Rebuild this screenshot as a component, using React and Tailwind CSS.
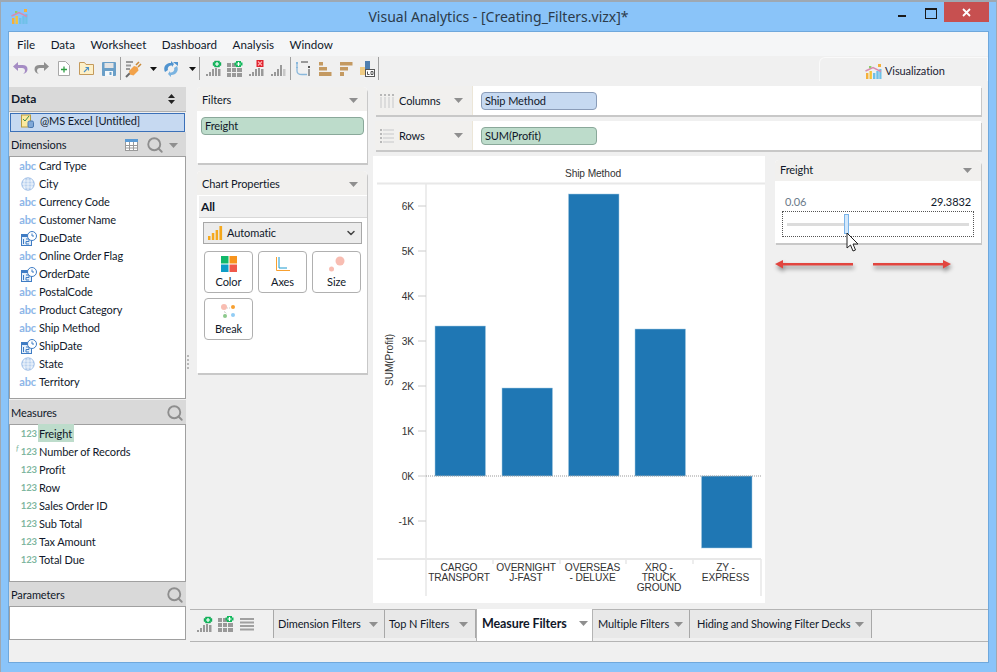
import React from "react";
import { Search, ChevronDown } from "lucide-react";

const DIMENSIONS = [
  { name: "Card Type", type: "abc" },
  { name: "City", type: "geo" },
  { name: "Currency Code", type: "abc" },
  { name: "Customer Name", type: "abc" },
  { name: "DueDate", type: "date" },
  { name: "Online Order Flag", type: "abc" },
  { name: "OrderDate", type: "date" },
  { name: "PostalCode", type: "abc" },
  { name: "Product Category", type: "abc" },
  { name: "Ship Method", type: "abc" },
  { name: "ShipDate", type: "date" },
  { name: "State", type: "geo" },
  { name: "Territory", type: "abc" },
];

const MEASURES = ["Freight", "Number of Records", "Profit", "Row", "Sales Order ID", "Sub Total", "Tax Amount", "Total Due"];

const BARS = [
  { x: 62, top: 170, h: 150, label: ["CARGO", "TRANSPORT"] },
  { x: 129, top: 232, h: 88, label: ["OVERNIGHT", "J-FAST"] },
  { x: 195.5, top: 38, h: 282, label: ["OVERSEAS", "- DELUXE"] },
  { x: 262, top: 173, h: 147, label: ["XRQ -", "TRUCK", "GROUND"] },
  { x: 328.5, top: 320, h: 72, label: ["ZY -", "EXPRESS"] },
];

const TICKS = [["6K", 50], ["5K", 95], ["4K", 140], ["3K", 185], ["2K", 230], ["1K", 275], ["0K", 320], ["-1K", 365]];

const Caret = ({ className = "" }) => (
  <svg width="9" height="5" viewBox="0 0 9 5" className={className}>
    <path d="M0 0h9L4.5 5z" fill="#8f8f8f" />
  </svg>
);

const BlackCaret = ({ className = "" }) => (
  <svg width="7" height="4" viewBox="0 0 7 4" className={className}>
    <path d="M0 0h7L3.5 4z" fill="#111" />
  </svg>
);

const Logo = ({ className = "" }) => (
  <svg width="17" height="17" viewBox="0 0 17 17" className={className}>
    <rect x="1" y="10" width="2.4" height="6" fill="#f5b03a" />
    <rect x="4.500" y="8" width="2.4" height="8" fill="#f5c33a" />
    <rect x="8" y="10" width="2.4" height="6" fill="#6fc1e8" />
    <rect x="11.300" y="8" width="2.4" height="8" fill="#6fc1e8" />
    <rect x="14.300" y="6" width="2.2" height="10" fill="#6fc1e8" />
    <rect x="4" y="3" width="2.4" height="2.4" fill="#8ccf6a" />
    <rect x="13" y="1" width="3" height="3" fill="#f5b03a" />
    <path d="M0.500 8L8 4.500l8 4" fill="none" stroke="#d78cb0" strokeWidth="1.400" />
  </svg>
);

const Undo = ({ color, flip, className = "" }) => (
  <svg width="16" height="15" viewBox="0 0 16 15" className={className} style={flip ? { transform: "scaleX(-1)" } : undefined}>
    <path d="M6 1L1 5.500 6 10V7h4c2 0 3 1.200 3 2.800 0 1.200-.6 2.200-2 3.200 3-.6 4.500-2.600 4.500-4.800C15.500 5.400 13.500 4 10.500 4H6z" fill={color} />
  </svg>
);

const NewDoc = ({ className = "" }) => (
  <svg width="12" height="15" viewBox="0 0 12 15" className={className}>
    <path d="M.5.500h7l4 4v10H.500z" fill="#fff" stroke="#a8a8a8" />
    <path d="M6 5.500v6M3 8.500h6" stroke="#2f9e44" strokeWidth="1.300" />
  </svg>
);

const Folder = ({ className = "" }) => (
  <svg width="15" height="13" viewBox="0 0 15 13" className={className}>
    <path d="M.5 12.500V.500h5l1.500 2h7.500v10z" fill="#fdf0c8" stroke="#c49a5c" />
    <path d="M5 10l4.500-4.500M6.500 5.500h3v3" fill="none" stroke="#4a90c8" strokeWidth="1.100" />
  </svg>
);

const Save = ({ className = "" }) => (
  <svg width="14" height="14" viewBox="0 0 14 14" className={className}>
    <rect width="14" height="14" rx="1" fill="#6a9fc8" />
    <rect x="2.500" y="1" width="9" height="5" fill="#e4e4e4" />
    <rect x="3" y="9" width="8" height="5" fill="#f4f8fb" />
    <rect x="7.500" y="10" width="2" height="3" fill="#6a9fc8" />
  </svg>
);

const Plug = ({ className = "" }) => (
  <svg width="18" height="18" viewBox="0 0 18 18" className={className}>
    <rect x="1" y="1" width="7" height="2" fill="#9a9a9a" />
    <rect x="1" y="4.500" width="5" height="2" fill="#9a9a9a" />
    <rect x="1" y="8" width="4" height="2" fill="#9a9a9a" />
    <path d="M1 17l4-4" stroke="#6a6a6a" strokeWidth="2" />
    <path d="M4 11l5-5 3.500 1 1 3.500-5 5-3.500-1z" fill="#f2a24a" />
    <path d="M11 5l3-3M13 7l3-3" stroke="#c98a3a" strokeWidth="1.600" />
  </svg>
);

const Sync = ({ className = "" }) => (
  <svg width="16" height="16" viewBox="0 0 16 16" className={className}>
    <path d="M2 11C-.5 6 3.500 1.500 8 2V0l3 3-2 3V4.500C6 4 4 7 5 9z" fill="#4f93cf" />
    <path d="M14 5c2.500 5-1.500 9.500-6 9v2l-3-3 2-3v1.500c3 .5 5-2.500 4-4.500z" fill="#7ab3e0" />
    <path d="M10 1h5v4z" fill="#4f93cf" />
  </svg>
);

// bar chart glyph used by several toolbar buttons, with an optional badge on top
const BarsIcon = ({ badge, light, className = "" }) => (
  <svg width="16" height="17" viewBox="0 0 16 17" className={className}>
    <rect x="0" y="14" width="2" height="2" fill="#999" />
    <rect x="3" y="12" width="2" height="4" fill="#999" />
    <rect x="6" y="9" width="2" height="7" fill="#999" />
    <rect x="9" y={light ? 5 : 8} width="2" height={light ? 11 : 8} fill="#999" />
    <rect x="12" y="9" width="2.500" height="7" fill={light ? "#c8c8c8" : "#999"} />
    {badge === "plus" && (
      <>
        <path d="M8.500 1h5v1.500H15v3h-1.500V7h-5V5.500H7v-3h1.500z" fill="#12b85c" stroke="#0d9a4c" strokeWidth=".4" />
        <path d="M11 2v4M9 4h4" stroke="#fff" strokeWidth="1.200" />
      </>
    )}
    {badge === "x" && (
      <>
        <rect x="7.500" y="0" width="7" height="7" fill="#e0202c" />
        <path d="M9 1.500l4 4M13 1.500l-4 4" stroke="#ffb0b0" strokeWidth="1.200" />
      </>
    )}
  </svg>
);

const GridIcon = ({ className = "" }) => (
  <svg width="16" height="16" viewBox="0 0 16 16" className={className}>
    <path d="M0 2h4v4H0zM5 2h4v4H5zM0 7h4v4H0zM5 7h4v4H5zM10 7h5v4h-5zM0 12h4v4H0zM5 12h4v4H5zM10 12h5v4h-5z" fill="#999" />
    <path d="M9 0h5v1.500h1.500v3H14V6H9V4.500H7.500v-3H9z" fill="#12b85c" />
    <path d="M11.500 1v4M9.500 3h4" stroke="#fff" strokeWidth="1.200" />
  </svg>
);

const SwapIcon = ({ className = "" }) => (
  <svg width="14" height="15" viewBox="0 0 14 15" className={className}>
    <path d="M5 1h7" stroke="#999" strokeWidth="2" />
    <rect x="0" y="1" width="2" height="2" fill="#8ab8dc" />
    <rect x="12" y="5" width="2" height="2" fill="#555" />
    <path d="M1 3v7c0 2.500 2 3.500 5 3.500h5" fill="none" stroke="#8ab8dc" strokeWidth="1.300" />
    <rect x="12" y="8" width="2" height="7" fill="#999" />
    <path d="M0 6l1 1 1-1" fill="none" stroke="#8ab8dc" />
  </svg>
);

const SortAsc = ({ className = "" }) => (
  <svg width="13" height="14" viewBox="0 0 13 14" className={className}>
    <path d="M0 0h4v3.500H0zM0 5h8v3.500H0zM0 10h12.500v4H0z" fill="#c49a62" />
  </svg>
);

const SortDesc = ({ className = "" }) => (
  <svg width="13" height="14" viewBox="0 0 13 14" className={className}>
    <path d="M0 0h12.500v3.500H0zM0 5h8v3.500H0zM0 10h4v4H0z" fill="#c49a62" />
  </svg>
);

const SwatchIcon = ({ className = "" }) => (
  <svg width="15" height="16" viewBox="0 0 15 16" className={className}>
    <rect x="0" y="6" width="5" height="8" fill="#f0cc84" />
    <rect x="5" y="0" width="5" height="9" fill="#4f7fb0" />
    <rect x="5.500" y="8.500" width="9" height="7" fill="#fff" stroke="#555" />
    <path d="M7.500 10.500v3h2M11 10.500h2v3h-2z" fill="none" stroke="#555" />
  </svg>
);

const Sep = ({ className = "" }) => <div className={`w-px h-[23px] bg-[#a0a0a0] ${className}`} />;

const Globe = () => (
  <svg width="14" height="14" viewBox="0 0 14 14">
    <circle cx="7" cy="7" r="6.200" fill="#bcd3ef" stroke="#9dbde6" />
    <path d="M1 7h12M2 4h10M2 10h10M7 1v12M4 2c-1.500 3-1.500 7 0 10M10 2c1.500 3 1.500 7 0 10" fill="none" stroke="#fff" strokeWidth=".7" />
  </svg>
);

const DateIcon = () => (
  <svg width="16" height="15" viewBox="0 0 16 15">
    <rect x="0.500" y="3.500" width="10" height="11" fill="#e6f0fa" stroke="#3f7cc4" />
    <rect x="0" y="3" width="11" height="3" fill="#3f7cc4" />
    <path d="M2.500 8v5M5 8h3v2.500H5V13h3" fill="none" stroke="#3f7cc4" />
    <circle cx="11" cy="5" r="4.500" fill="#fff" stroke="#3f7cc4" />
    <path d="M11 2.500V5h2" fill="none" stroke="#3f7cc4" />
  </svg>
);

const SideHeader = ({ label, children, className = "" }) => (
  <div className={`h-[24px] bg-[#d9d9d9] flex items-center pl-[2px] pr-[3px] justify-between shrink-0 ${className}`}>
    <span>{label}</span>
    <div className="flex items-center">{children}</div>
  </div>
);

const GrayGlass = () => <Search size={18} strokeWidth={2.500} className="text-[#8e8e8e] mr-[-1px]" />;

const DeckHeader = ({ label, className = "" }) => (
  <div className={`h-[24px] bg-[#f1f0ee] flex items-center justify-between pl-[5px] pr-[9px] ${className}`}>
    <span>{label}</span>
    <Caret />
  </div>
);

const PropButton = ({ label, children }) => (
  <div className="w-[49px] h-[42px] border border-[#b0b0b0] rounded-[4px] bg-white flex flex-col items-center pt-[3px]">
    <div className="h-[18px] flex items-center justify-center">{children}</div>
    <span className="mt-[2px] leading-[14px]">{label}</span>
  </div>
);

const Shelf = ({ label, pill, pillColor, children }) => (
  <div className="h-[29px] flex bg-white ml-[2px] shadow-[1px_2px_0_#c8c8c8] shrink-0">
    <div className="w-[98px] bg-[#f1f0ee] border-r border-[#ece6d8] flex items-center pl-[5px] pr-[9px]">
      {children}
      <span className="ml-[4px] flex-1 pt-[2px]">{label}</span>
      <Caret />
    </div>
    <div className={`ml-[8px] mt-[6px] w-[116px] h-[18px] rounded-[4px] border pl-[3px] leading-[16px] ${pillColor}`}>{pill}</div>
  </div>
);

const Tab = ({ label, className = "" }) => (
  <div className={`h-[28px] flex items-center justify-between border-r border-[#a8a8a8] bg-[#e8e8e8] shrink-0 ${className}`}>
    <span className="whitespace-nowrap">{label}</span>
    <Caret />
  </div>
);

const Chart = () => (
  <svg width="392" height="447" viewBox="0 0 392 447" className="block shrink-0 font-['Liberation_Sans',sans-serif]">
    <rect width="392" height="447" fill="#fff" />
    <text x="220" y="21" fontSize="10.200" textAnchor="middle" fill="#333">Ship Method</text>
    <path d="M4 27.500h388M4 403h384" stroke="#e8e8e8" strokeWidth="2" fill="none" />
    <path d="M53 27v413M388 403v37M120 403v5M187 403v5M253 403v5M320 403v5" stroke="#e8e8e8" strokeWidth="1.500" fill="none" />
    {BARS.map((b) => (
      <rect key={b.x} x={b.x} y={b.top} width="50.500" height={b.h} fill="#1f77b4" stroke="#a5c9e2" strokeWidth=".5" />
    ))}
    <line x1="53" y1="320" x2="388" y2="320" stroke="#999" strokeDasharray="1 1" />
    {TICKS.map(([t, y]) => (
      <g key={t}>
        <text x="41" y={y + 4} fontSize="10.200" textAnchor="end" fill="#333">{t}</text>
        <line x1="45" y1={y} x2="53" y2={y} stroke="#ccc" />
      </g>
    ))}
    <text x="20" y="204" fontSize="10.200" textAnchor="middle" fill="#333" transform="rotate(-90 20 204)">SUM(Profit)</text>
    {BARS.map((b, i) => (
      <text key={i} x={b.x + 24} fontSize="10.200" textAnchor="middle" fill="#333">
        {b.label.map((line, j) => (
          <tspan key={j} x={b.x + 24} y={415 + j * 10}>{line}</tspan>
        ))}
      </text>
    ))}
  </svg>
);

const Arrows = () => (
  <svg width="176" height="14" viewBox="0 0 176 14" className="block mt-[16px] drop-shadow-[1px_3px_2px_rgba(0,0,0,0.45)]">
    <path d="M0 5l8-4v3h70v2.500H8v3z" fill="#e2453f" />
    <path d="M176 5l-8-4v3H98v2.500h70v3z" fill="#e2453f" />
  </svg>
);

const App = () => {
  return (
    <div className="relative w-[997px] h-[672px] bg-[#8ac4f9] border-t-2 border-x border-[#9ea8b2] flex flex-col overflow-hidden font-['Lato',sans-serif] text-[11px] tracking-[-0.1px] text-[#10182a]">
      {/* title bar */}
      <div className="h-[29px] grid grid-cols-[1fr_auto_1fr] shrink-0">
        <div className="pl-[10px] pt-[6px]">
          <Logo />
        </div>
        <div className="text-[14px] tracking-normal leading-[29px] text-[#2c3b4a] font-['Noto_Sans',sans-serif]">Visual Analytics - [Creating_Filters.vizx]*</div>
        <div className="flex justify-end items-start pr-[7px]">
          <div className="w-[8px] h-[2px] bg-[#1a1a1a] mt-[13px] mr-[19px]" />
          <div className="w-[10px] h-[8px] border border-t-2 border-[#1a1a1a] mt-[6px] mr-[7px] box-content" />
          <div className="w-[45px] h-[20px] bg-[#c75050] text-white flex items-center justify-center">
            <svg width="9" height="9" viewBox="0 0 9 9">
              <path d="M1 1l7 7M8 1L1 8" stroke="#fff" strokeWidth="1.800" />
            </svg>
          </div>
        </div>
      </div>

      <div className="mx-[7px] h-[632px] shrink-0 flex flex-col border border-[#6fa8dc] bg-[#f0f0f0]">
        {/* menu */}
        <div className="h-[24px] bg-[#f5f6f7] flex items-center pl-[8px] pt-[2px] gap-[15.500px] text-[11.600px] tracking-normal shrink-0">
          {["File", "Data", "Worksheet", "Dashboard", "Analysis", "Window"].map((m) => (
            <span key={m}>{m}</span>
          ))}
        </div>

        {/* toolbar */}
        <div className="h-[25px] flex items-center shrink-0 relative">
          <Undo color="#a58cc4" className="ml-[3px]" />
          <Undo color="#8f8f8f" flip className="ml-[6px]" />
          <NewDoc className="ml-[8px]" />
          <Folder className="ml-[9px]" />
          <Save className="ml-[8px]" />
          <Sep className="ml-[4px]" />
          <Plug className="ml-[4px]" />
          <BlackCaret className="ml-[7px]" />
          <Sync className="ml-[6px]" />
          <BlackCaret className="ml-[10px]" />
          <Sep className="ml-[3px]" />
          <BarsIcon badge="plus" className="ml-[6px]" />
          <GridIcon className="ml-[5px]" />
          <BarsIcon badge="x" className="ml-[6px]" />
          <BarsIcon light className="ml-[6px]" />
          <Sep className="ml-[3px]" />
          <SwapIcon className="ml-[5px]" />
          <SortAsc className="ml-[9px]" />
          <SortDesc className="ml-[8px]" />
          <SwatchIcon className="ml-[7px]" />
          <Sep className="ml-[3px]" />
          <div className="ml-auto w-[169px] h-[24px] mt-[1px] pt-[3px] bg-[#f0f0f0] border-t border-l border-r border-[#fafafa] rounded-tl-[6px] flex items-center pl-[45px] gap-[3px] text-[#223]">
            <Logo />
            <span>Visualization</span>
          </div>
        </div>

        {/* main */}
        <div className="flex-1 flex min-h-0">
          {/* data pane */}
          <div className="w-[177px] pt-[6px] flex flex-col shrink-0">
            <SideHeader label={<b className="font-bold text-[12px]">Data</b>}>
              <svg width="7" height="10" viewBox="0 0 7 10" className="mr-[8px]">
                <path d="M3.500 0L7 4H0zM3.500 10L0 6h7z" fill="#222" />
              </svg>
            </SideHeader>
            <div className="h-[21px] bg-[#f0f0f0] px-[1px] border-t border-[#b0b0b0] shrink-0">
              <div className="h-[19px] mt-[0.500px] bg-[#c6d9f1] border border-[#3b70b8] flex items-center pl-[10px] pb-[2px]">
                <svg width="13" height="14" viewBox="0 0 13 14" className="mr-[6px]">
                  <rect x=".5" y="1" width="9" height="12" fill="#fbe9a0" stroke="#b89b40" />
                  <path d="M2 5l2 2 4-5" fill="none" stroke="#3f8f4f" />
                  <rect x="7" y="7" width="5.500" height="6.500" rx="1.500" fill="#7fa8d8" stroke="#4a78b0" />
                </svg>
                <span>@MS Excel [Untitled]</span>
              </div>
            </div>
            <SideHeader label="Dimensions" className="pt-[2px]">
              <svg width="13" height="12" viewBox="0 0 13 12" className="mr-[8px]">
                <rect x=".5" y=".5" width="12" height="11" fill="#fff" stroke="#9a9a9a" />
                <rect x="0" y="0" width="13" height="3" fill="#5b9bd5" />
                <path d="M4.500 3v8M8.500 3v8M1 6.500h11M1 9h11" stroke="#9a9a9a" />
              </svg>
              <GrayGlass />
              <Caret className="ml-[6px] mr-[5px]" />
            </SideHeader>
            <div className="h-[243px] bg-white border border-[#a0a0a0] shrink-0">
              <div>
                {DIMENSIONS.map((d) => (
                  <div key={d.name} className="h-[18px] flex items-center">
                    <div className="w-[27px] flex justify-end pr-[1px] shrink-0">
                      {d.type === "abc" && <span className="text-[11px] font-bold text-[#8db6e8] leading-none -mt-[2px]">abc</span>}
                      {d.type === "geo" && <div className="mr-[1px]"><Globe /></div>}
                      {d.type === "date" && <div className="-mr-[1px]"><DateIcon /></div>}
                    </div>
                    <span className="ml-[2px]">{d.name}</span>
                  </div>
                ))}
              </div>
            </div>
            <SideHeader label="Measures" className="mt-px pt-[2px]">
              <GrayGlass />
            </SideHeader>
            <div className="h-[158px] bg-white border border-[#a0a0a0] shrink-0">
              <div className="-mt-px">
                {MEASURES.map((m, i) => (
                  <div key={m} className="h-[18px] flex items-start relative">
                    {m === "Number of Records" && (
                      <span className="absolute left-[6px] top-[0px] text-[8px] italic text-[#7fb79f]">f</span>
                    )}
                    <div className="w-[27px] text-right text-[9.500px] leading-[20px] text-[#7fb79f] font-bold shrink-0">123</div>
                    <span className={`ml-[1px] px-[1px] h-[18px] leading-[20px] ${i === 0 ? "bg-[#bddccb] pr-[2px]" : ""}`}>{m}</span>
                  </div>
                ))}
              </div>
            </div>
            <SideHeader label="Parameters" className="pt-[2px]">
              <GrayGlass />
            </SideHeader>
            <div className="h-[34px] bg-white border border-[#a0a0a0] shrink-0" />
          </div>

          {/* splitter */}
          <div className="w-[4px] flex items-center justify-center shrink-0">
            <div className="w-[2px] h-[14px] border-l-2 border-dotted border-[#b8b8b8]" />
          </div>

          <div className="flex-1 flex flex-col min-w-0">
            <div className="flex-1 flex pl-[7px] min-h-0">
              {/* filter + chart property decks */}
              <div className="w-[170px] pt-[6px] shrink-0">
                <div className="h-[76px] bg-white shadow-[1px_2px_0_#c8c8c8] rounded-t-[4px]">
                  <DeckHeader label="Filters" className="rounded-t-[4px] pt-[2px]" />
                  <div className="ml-[4px] mt-[6px] w-[163px] h-[18px] rounded-[4px] bg-[#bddccb] border border-[#8aa89a] pl-[3px] leading-[16px]">Freight</div>
                </div>
                <div className="h-[202px] mt-[8px] bg-white shadow-[1px_2px_0_#c8c8c8] rounded-t-[4px]">
                  <DeckHeader label="Chart Properties" className="rounded-t-[4px] pt-[2px]" />
                  <div className="h-[22px] ml-[2px] mt-[1px] bg-[#f0f0f0] border-b border-[#d8d8d8] pl-[2px] font-bold text-[12px] leading-[21px]">All</div>
                  <div className="ml-[6px] mt-[4px] w-[159px] h-[22px] bg-[#ececec] border border-[#a8a8a8] flex items-center pl-[4px] pr-[4px]">
                    <svg width="15" height="14" viewBox="0 0 15 14" className="mr-[4px]">
                      <path d="M0 10h2.500v4H0zM3.800 7h2.500v7H3.800zM7.600 4h2.500v10H7.600zM11.400 0h2.700v14h-2.700z" fill="#f5a81c" />
                    </svg>
                    <span className="flex-1">Automatic</span>
                    <ChevronDown size={12} strokeWidth={3} className="text-[#444]" />
                  </div>
                  <div className="ml-[7px] mt-[7px] w-[157px] flex flex-wrap gap-x-[5px] gap-y-[5px]">
                    <PropButton label="Color">
                      <svg width="16" height="16" viewBox="0 0 16 16">
                        <rect width="7.500" height="7.500" fill="#12b86a" />
                        <rect x="8.500" width="7.500" height="7.500" fill="#f7941d" />
                        <rect y="8.500" width="7.500" height="7.500" fill="#0e9dc7" />
                        <rect x="8.500" y="8.500" width="7.500" height="7.500" fill="#f0584a" />
                      </svg>
                    </PropButton>
                    <PropButton label="Axes">
                      <svg width="14" height="14" viewBox="0 0 14 14">
                        <path d="M.5 0v13.500H14" fill="none" stroke="#f7a030" />
                        <path d="M3 0v11h8" fill="none" stroke="#1c9bd0" />
                      </svg>
                    </PropButton>
                    <PropButton label="Size">
                      <svg width="16" height="16" viewBox="0 0 16 16">
                        <circle cx="11" cy="5" r="4.500" fill="#f8bdb2" />
                        <circle cx="2.500" cy="13" r="2.500" fill="#f8bdb2" />
                      </svg>
                    </PropButton>
                    <PropButton label="Break">
                      <svg width="15" height="15" viewBox="0 0 15 15">
                        <path d="M6 4h4M3 7l3 3M4 8v3" stroke="#ccc" strokeDasharray="1 1" />
                        <circle cx="3" cy="3" r="3" fill="#f8bdb2" />
                        <circle cx="12" cy="3" r="2" fill="#f7a030" />
                        <circle cx="4" cy="12" r="2" fill="#8cc98c" />
                        <circle cx="12" cy="11" r="2" fill="#92cdf5" />
                      </svg>
                    </PropButton>
                  </div>
                </div>
              </div>

              {/* shelves, chart and filter card */}
              <div className="ml-[6px] w-[608px] pt-[5px] shrink-0 flex flex-col">
                <Shelf label="Columns" pill="Ship Method" pillColor="bg-[#c6d9f1] border-[#8a9cb8]">
                  <svg width="15" height="14" viewBox="0 0 15 14">
                    <path d="M0 0h2v2H0zM4 0h2v2H4zM8 0h2v2H8zM12 0h2v2h-2z" fill="#b8b8b8" />
                    <path d="M0 3h2v11H0zM4 3h2v11H4zM8 3h2v11H8zM12 3h2v11h-2z" fill="#dcdcdc" />
                  </svg>
                </Shelf>
                <div className="h-[6px] shrink-0" />
                <Shelf label="Rows" pill="SUM(Profit)" pillColor="bg-[#bddccb] border-[#8aa89a]">
                  <svg width="15" height="14" viewBox="0 0 15 14">
                    <path d="M0 0h2v2H0zM0 4h2v2H0zM0 8h2v2H0zM0 12h2v2H0z" fill="#b8b8b8" />
                    <path d="M3 0h11v2H3zM3 4h11v2H3zM3 8h11v2H3zM3 12h11v2H3z" fill="#dcdcdc" />
                  </svg>
                </Shelf>
                <div className="flex gap-[10px] mt-[6px]">
                  <Chart />
                  <div className="w-[206px] pt-[4px] shrink-0">
                    <div className="h-[83px] bg-white shadow-[1px_2px_0_#c8c8c8] rounded-t-[4px]">
                      <div className="h-[21px] bg-[#f1f0ee] flex items-center justify-between pl-[5px] pr-[9px] rounded-t-[4px]">
                        <span>Freight</span>
                        <Caret />
                      </div>
                      <div className="flex justify-between px-[10px] mt-[13px] leading-[16px]">
                        <span className="text-[#6b7a8a]">0.06</span>
                        <span>29.3832</span>
                      </div>
                      <div className="mx-[7px] mt-[1px] h-[26px] border border-dotted border-[#555] flex items-center px-[4px] relative">
                        <div className="w-full h-[3px] bg-[#dcdcdc]" />
                        <div className="absolute left-[61px] top-[2px] w-[5px] h-[20px] bg-[#d3e8fb] border border-[#7ab4ea]" />
                      </div>
                    </div>
                    <Arrows />
                  </div>
                </div>
              </div>
            </div>

            {/* sheet tabs */}
            <div className="h-[33px] shrink-0 border-t border-b border-[#b4b4b4] flex items-start relative">
              <div className="w-[84px] h-[28px] flex items-center pl-[7px] gap-[5px] shrink-0 border-r border-[#a8a8a8]">
                <BarsIcon badge="plus" />
                <GridIcon />
                <svg width="14" height="13" viewBox="0 0 14 13" className="ml-[1px]">
                  <path d="M0 1h14M0 4.500h14M0 8h14M0 11.500h14" stroke="#a0a0a0" strokeWidth="1.800" />
                </svg>
              </div>
              <Tab label="Dimension Filters" className="w-[111px] pl-[4px] pr-[6px]" />
              <Tab label="Top N Filters" className="w-[91px] pl-[4px] pr-[7px]" />
              <div className="w-[117px] h-[32px] -mt-px bg-white border-l border-r border-[#b4b4b4] flex items-center justify-between pl-[5px] pr-[4px] font-bold text-[12.500px] shrink-0 pb-[1px]">
                <span className="whitespace-nowrap">Measure Filters</span>
                <Caret className="-mt-[3px]" />
              </div>
              <Tab label="Multiple Filters" className="w-[97px] pl-[5px] pr-[6px]" />
              <Tab label="Hiding and Showing Filter Decks" className="w-[182px] pl-[7px] pr-[7px]" />
            </div>
          </div>
        </div>

        {/* status bar */}
        <div className="h-[20px] shrink-0 bg-[#f0f0f0]" />
      </div>

      {/* mouse cursor over the slider */}
      <svg width="14" height="20" viewBox="0 0 14 20" className="absolute left-[845px] top-[230px]">
        <path d="M1 1v15l3.500-3 2.500 6 2.500-1-2.500-6h5z" fill="#fff" stroke="#222" strokeWidth="1" />
      </svg>
    </div>
  );
};

export default App;
